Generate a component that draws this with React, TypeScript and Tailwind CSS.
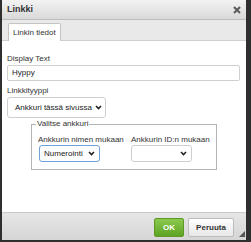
import React from "react";

function Chevron() {
  return (
    <svg width="7" height="5" viewBox="0 0 7 5" className="shrink-0">
      <path d="M1 1 L3.5 3.5 L6 1" stroke="#222" strokeWidth="1.6" fill="none" />
    </svg>
  );
}

function FakeSelect({ value, className }: { value: string; className: string }) {
  return (
    <div className={`flex items-center justify-between bg-white text-[8px] text-[#222] ${className}`}>
      <span className="leading-none">{value}</span>
      <Chevron />
    </div>
  );
}

export default function App() {
  return (
    <div className="w-[251px] h-[242px] bg-[#2f2f2f] pl-[2px] pr-[5px] pb-[2px] flex font-['Liberation_Sans',Arial,sans-serif] text-[#333]">
      <div className="flex-1 flex flex-col bg-white">
        {/* title bar */}
        <div className="h-[20px] shrink-0 border-b border-[#bdbdbd] bg-linear-to-b from-[#f3f3f3] to-[#d9d9d9] flex items-center justify-between pl-[5px] pr-[5px]">
          <span className="text-[9px] font-bold leading-none text-[#333]">Linkki</span>
          <svg width="8" height="8" viewBox="0 0 8 8">
            <path d="M1 1 L7 7 M7 1 L1 7" stroke="#5a5a5a" strokeWidth="2" />
          </svg>
        </div>

        {/* tabs */}
        <div className="h-[21px] shrink-0 bg-[#e9e9e9] border-b border-[#cfcfcf] flex items-end pl-[6px]">
          <div className="h-[18px] -mb-px bg-white border border-b-0 border-[#c4c4c4] rounded-t-[2px] px-[4px] flex items-center text-[8px] leading-none">
            Linkin tiedot
          </div>
        </div>

        {/* body */}
        <div className="flex-1 pl-[5px] pr-[6px] pt-[13px] text-[8px]">
          <div className="leading-[10px]">Display Text</div>
          <div className="mt-[1px] h-[16px] border border-[#d0d0d0] rounded-[2px] flex items-center pl-[4px] text-[#222]">
            Hyppy
          </div>

          <div className="mt-[5px] leading-[10px]">Linkkityyppi</div>
          <FakeSelect
            value="Ankkuri tässä sivussa"
            className="mt-[1px] w-[99px] h-[21px] border border-[#cfcfcf] rounded-[3px] pl-[7px] pr-[3px]"
          />

          <fieldset className="mt-[1px] ml-[24px] w-[186px] border border-[#b3b3b3] px-[6px] pb-[7px]">
            <legend className="-ml-[2px] px-[1px] leading-[10px]">Valitse ankkuri</legend>
            <div className="flex pt-[6px]">
              <div className="w-[93px] flex flex-col">
                <div className="leading-[10px] whitespace-nowrap">Ankkurin nimen mukaan</div>
                <FakeSelect
                  value="Numerointi"
                  className="ml-[1px] w-[61px] h-[17px] border border-[#6fa0d8] rounded-[3px] pl-[4px] pr-[4px]"
                />
              </div>
              <div className="flex flex-col">
                <div className="leading-[10px] whitespace-nowrap">Ankkurin ID:n mukaan</div>
                <FakeSelect
                  value=""
                  className="w-[61px] h-[17px] border border-[#cfcfcf] rounded-[3px] pl-[4px] pr-[4px]"
                />
              </div>
            </div>
          </fieldset>
        </div>

        {/* footer */}
        <div className="relative h-[28px] shrink-0 border-t border-[#c9c9c9] bg-linear-to-b from-[#e6e6e6] to-[#d5d5d5] flex items-start justify-end pt-[5px] pr-[12px] gap-[4px]">
          <button
            type="button"
            className="w-[30px] h-[19px] rounded-[2px] border border-[#5c9a25] bg-linear-to-b from-[#8bc94d] to-[#5ea321] text-white text-[8px] font-bold leading-none"
          >
            OK
          </button>
          <button
            type="button"
            className="w-[46px] h-[19px] rounded-[2px] border border-[#bcbcbc] bg-linear-to-b from-[#ffffff] to-[#e7e7e7] text-[#333] text-[8px] font-bold leading-none"
          >
            Peruuta
          </button>
          <svg width="6" height="6" viewBox="0 0 6 6" className="absolute right-[1px] bottom-[3px]">
            <path d="M6 0 L6 6 L0 6 Z" fill="#555" />
          </svg>
        </div>
      </div>
    </div>
  );
}
